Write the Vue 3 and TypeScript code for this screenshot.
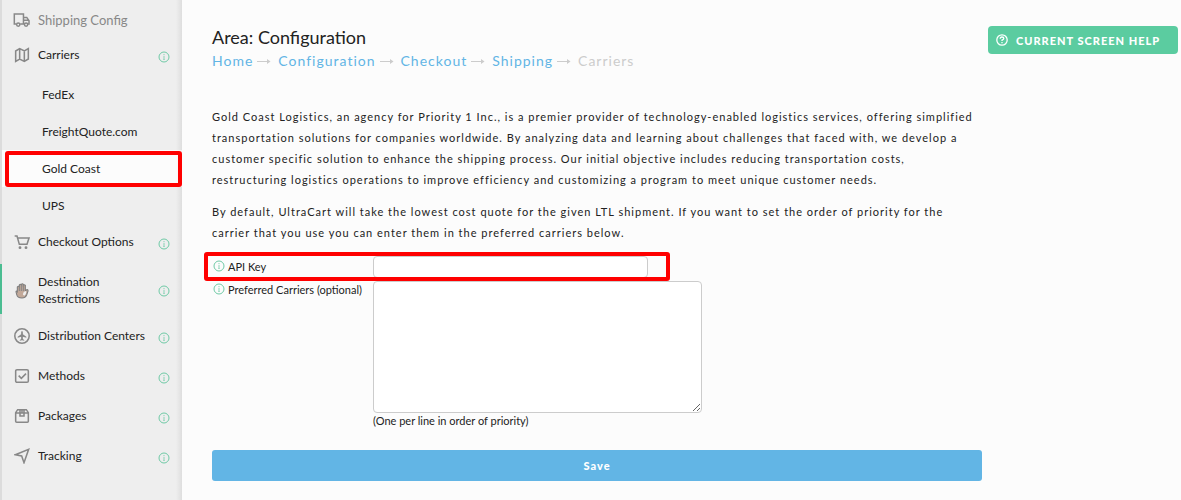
<script setup lang="ts">
import { ref } from 'vue'

interface NavItem {
  label: string
  icon: string
  marked?: boolean
  children?: { label: string; active?: boolean }[]
}

const nav: NavItem[] = [
  {
    label: 'Carriers',
    icon: 'map',
    children: [
      { label: 'FedEx' },
      { label: 'FreightQuote.com' },
      { label: 'Gold Coast', active: true },
      { label: 'UPS' },
    ],
  },
  { label: 'Checkout Options', icon: 'cart' },
  { label: 'Destination Restrictions', icon: 'hand', marked: true },
  { label: 'Distribution Centers', icon: 'plane' },
  { label: 'Methods', icon: 'check' },
  { label: 'Packages', icon: 'package' },
  { label: 'Tracking', icon: 'send' },
]

const crumbs: string[] = ['Home', 'Configuration', 'Checkout', 'Shipping']

const apiKey = ref('')
const preferred = ref('')
</script>

<template>
  <svg class="defs" width="0" height="0" aria-hidden="true">
    <symbol id="i-info" viewBox="0 0 12 12">
      <circle cx="6" cy="6" r="5" fill="none" stroke="currentColor" />
      <path d="M6 3v1.200M6 5v4" fill="none" stroke="currentColor" opacity="0.8" />
      <path d="M5 8.500h2" fill="none" stroke="currentColor" opacity="0.3" />
    </symbol>
    <symbol id="i-map" viewBox="0 0 24 24">
      <path d="M2.500 6v15.500L8.500 18l7 3.500 6-3.500V2.500l-6 3.500-7-3.500zM8.500 2.500V18M15.500 6v15.500" />
    </symbol>
    <symbol id="i-cart" viewBox="0 0 24 24">
      <path d="M1 3h3.500l3.500 12.500h11.500L22.500 6H5.500" />
      <circle cx="9" cy="20.500" r="1" /><circle cx="18" cy="20.500" r="1" />
    </symbol>
    <symbol id="i-hand" viewBox="0 0 24 24">
      <path class="palm" d="M5 13V6q1.500-2 3 0V3q1.500-2 3 0V2q1.500-2 3 0v1.500q1.500-2 3 0V12l2-2q2.500-.5 2 2l-2 6q-2 4.500-7 4.500Q5 22.500 4 17l-1-4q.500-2 2 0z" />
      <path d="M8 6v6M11 3v9M14 3v9" />
      <path class="crease" d="M17.500 12q-4 1-4 5.500l2 1.500q3-2 3-6z" />
    </symbol>
    <symbol id="i-plane" viewBox="0 0 24 24">
      <circle cx="12" cy="12" r="10.800" />
      <path class="solid" d="M12 4.500q1.300.500 1.300 2.500v2.500l5.200 3.500v1.500l-5.200-1.500v3.500l2 1.500v1.200L12 18.500l-3.300.700V18l2-1.500V13l-5.200 1.500V13l5.200-3.500V7q0-2 1.300-2.500z" />
    </symbol>
    <symbol id="i-check" viewBox="0 0 24 24">
      <rect x="2.500" y="2.500" width="19" height="19" rx="2" />
      <path d="M7 11.500l4 4 7-7" />
    </symbol>
    <symbol id="i-package" viewBox="0 0 24 24">
      <path d="M2.500 7v13q0 1.500 1.500 1.500h16q1.500 0 1.500-1.500V7l-3-4.500H5.500zM2.500 7.500h19M9 2.500v9.500h6V2.500M12 2.500v5" />
    </symbol>
    <symbol id="i-send" viewBox="0 0 24 24">
      <path d="M2 10L22 2l-7 20-3.500-10z" />
    </symbol>
    <symbol id="i-truck" viewBox="0 0 26 24">
      <path d="M5 18H2V3h14v15h-5M16 8h5l3.500 5v5H23M16 12.500h8.500" />
      <circle cx="8" cy="19" r="2.500" /><circle cx="20" cy="19" r="2.500" />
    </symbol>
  </svg>

  <div class="page">
    <nav class="sidebar" aria-label="Shipping">
      <div class="heading">
        <svg class="icon truck"><use href="#i-truck" /></svg>
        <span>Shipping Config</span>
      </div>
      <ul class="menu">
        <li v-for="item in nav" :key="item.label">
          <div class="row" :class="{ marked: item.marked }">
            <a href="#" class="link">
              <svg class="icon" :class="item.icon"><use :href="'#i-' + item.icon" /></svg>
              <span>{{ item.label }}</span>
            </a>
            <button type="button" class="tip" :aria-label="'About ' + item.label">
              <svg class="info"><use href="#i-info" /></svg>
            </button>
          </div>
          <ul v-if="item.children" class="submenu">
            <li v-for="child in item.children" :key="child.label">
              <a href="#" :class="{ active: child.active }">{{ child.label }}</a>
            </li>
          </ul>
        </li>
      </ul>
    </nav>

    <main class="main">
      <div class="content">
        <h1>Area: Configuration</h1>
        <nav class="crumbs" aria-label="Breadcrumb">
          <template v-for="c in crumbs" :key="c">
            <a href="#">{{ c }}</a>
            <svg class="arrow" viewBox="0 0 14 8" aria-hidden="true"><path d="M0 4.500h13" /><path class="tip-head" d="M10 2l3.500 2.500L10 7z" /></svg>
          </template>
          <span>Carriers</span>
        </nav>

        <div class="copy">
          <p>
            Gold Coast Logistics, an agency for Priority 1 Inc., is a premier provider of technology-enabled logistics
            services, offering simplified transportation solutions for companies worldwide. By analyzing data and
            learning about challenges that faced with, we develop a customer specific solution to enhance the shipping
            process. Our initial objective includes reducing transportation costs, restructuring logistics operations to
            improve efficiency and customizing a program to meet unique customer needs.
          </p>
          <p>
            By default, UltraCart will take the lowest cost quote for the given LTL shipment. If you want to set the
            order of priority for the carrier that you use you can enter them in the preferred carriers below.
          </p>
        </div>

        <form @submit.prevent>
          <div class="field highlighted">
            <label for="api-key"><svg class="info"><use href="#i-info" /></svg>API Key</label>
            <input id="api-key" v-model="apiKey" type="text" />
          </div>
          <div class="field">
            <label for="preferred"><svg class="info"><use href="#i-info" /></svg>Preferred Carriers (optional)</label>
            <div class="control">
              <textarea id="preferred" v-model="preferred" aria-describedby="hint"></textarea>
              <div id="hint" class="hint">(One per line in order of priority)</div>
            </div>
          </div>
          <button type="submit" class="save">Save</button>
        </form>
      </div>

      <button type="button" class="help">
        <svg viewBox="0 0 12 12" aria-hidden="true">
          <circle cx="6" cy="6" r="5.200" />
          <path d="M4.200 4.800q0-1.800 1.800-1.800t1.800 1.600Q7.800 5.500 6 6.200v.9M6 8v1.200" />
        </svg>
        CURRENT SCREEN HELP
      </button>
    </main>
  </div>
</template>

<style>
body {
  background: #fcfcfc;
}
</style>

<style scoped>
*,
*::after {
  box-sizing: border-box;
}
.defs {
  position: absolute;
}
.page {
  display: flex;
  min-height: 100vh;
  font-family: Lato, 'Liberation Sans', sans-serif;
  font-size: 12px;
  color: #222;
}
.page a {
  text-decoration: none;
}
.page button {
  border: 0;
  font-family: inherit;
  cursor: pointer;
}
.sidebar {
  flex: 0 0 182px;
  border-left: 2px solid #dcdcdc;
  background: linear-gradient(to left, #dedede, #eee 6px);
}
.heading {
  display: flex;
  align-items: center;
  height: 37px;
  padding: 3px 0 0 11px;
  font-size: 13px;
  color: #888;
}
ul {
  list-style: none;
  margin: 0;
  padding: 0;
}
.menu {
  display: flex;
  flex-direction: column;
  gap: 4px;
}
.row {
  display: flex;
  align-items: center;
  min-height: 36px;
  padding-right: 12px;
}
.row.marked {
  min-height: 50px;
  margin-left: -2px;
  padding-top: 3px;
  border-left: 2px solid #4bbd92;
}
.link {
  flex: 1;
  display: flex;
  align-items: center;
  padding-left: 12px;
  line-height: 17px;
  color: #222;
}
.link span {
  padding-bottom: 2px;
}
.icon {
  flex: none;
  width: 16px;
  height: 16px;
  margin-right: 8px;
  fill: none;
  stroke: #888;
  stroke-width: 2.3;
}
.icon.truck {
  width: 17px;
}
.icon.hand {
  stroke-width: 1.6;
}
.palm {
  fill: #c2a898;
  stroke: #7d7d7d;
}
.crease {
  fill: #eee;
  stroke: none;
}
.solid {
  fill: #888;
  stroke: none;
}
.tip {
  padding: 4px 0 0;
  background: none;
  display: flex;
}
.marked .tip {
  padding: 0;
}
.info {
  flex: none;
  width: 12px;
  height: 12px;
  color: #6fcaa6;
}
.submenu {
  padding-top: 3px;
  margin-bottom: -4px;
}
.submenu a {
  display: flex;
  align-items: center;
  height: 37px;
  padding: 0 0 1px 40px;
  color: #222;
}
.submenu li {
  position: relative;
}
.submenu a.active {
  background: linear-gradient(to left, #f0f0f0, #fcfcfc 6px);
}
.submenu a.active::after {
  content: '';
  position: absolute;
  inset: 1px 0 0 3px;
  border: 4px solid #f00;
  border-radius: 3px;
}
.main {
  flex: 1;
  display: grid;
  grid-template-columns: 1fr 190px;
  gap: 6px;
  align-items: start;
  padding: 25px 3px 20px 30px;
}
h1 {
  margin: 0;
  font-size: 18px;
  font-weight: 400;
  line-height: 25px;
}
.crumbs {
  display: flex;
  align-items: center;
  font-size: 14px;
  line-height: 22px;
  letter-spacing: 1px;
  color: #ccc;
}
.crumbs a {
  color: #62b5e5;
}
.arrow {
  width: 14px;
  height: 8px;
  margin: 0 7px 0 4px;
  fill: none;
  stroke: #ccc;
}
.tip-head {
  fill: #ccc;
  stroke: none;
}
.copy {
  padding-top: 34px;
  font-size: 11px;
  line-height: 21px;
  letter-spacing: 1px;
}
.copy p {
  margin: 0 0 11px;
}
form {
  display: flex;
  flex-direction: column;
  gap: 3px;
  padding-top: 2px;
  font-size: 11px;
}
.field {
  position: relative;
  display: flex;
  align-items: flex-start;
}
.field label {
  flex: 0 0 161px;
  display: flex;
  align-items: center;
  gap: 3px;
  height: 18px;
  padding: 0 0 2px 1px;
  white-space: nowrap;
}
.highlighted {
  align-items: center;
}
.highlighted::after {
  content: '';
  position: absolute;
  left: -8px;
  width: 466px;
  top: -4px;
  bottom: -3px;
  border: 4px solid #f00;
  border-radius: 3px;
  pointer-events: none;
}
input,
textarea {
  display: block;
  margin: 0;
  border: 1px solid #ccc;
  border-radius: 4px;
  background: #fff;
  font: inherit;
}
input {
  width: 275px;
  height: 22px;
}
textarea {
  width: 329px;
  height: 132px;
}
.hint {
  line-height: 16px;
}
.save {
  height: 31px;
  margin-top: 18px;
  border-radius: 3px;
  background: #62b5e5;
  color: #fff;
  font-size: 11px;
  font-weight: 900;
  letter-spacing: 1px;
}
.help {
  display: flex;
  align-items: center;
  gap: 8px;
  height: 28px;
  margin-top: 1px;
  padding: 0 8px;
  border-radius: 4px;
  background: #5bcca0;
  color: #fff;
  font-size: 11px;
  font-weight: 900;
  letter-spacing: 1px;
  white-space: nowrap;
}
.help svg {
  width: 12px;
  height: 12px;
  fill: none;
  stroke: #fff;
  stroke-width: 1.3;
}
</style>
